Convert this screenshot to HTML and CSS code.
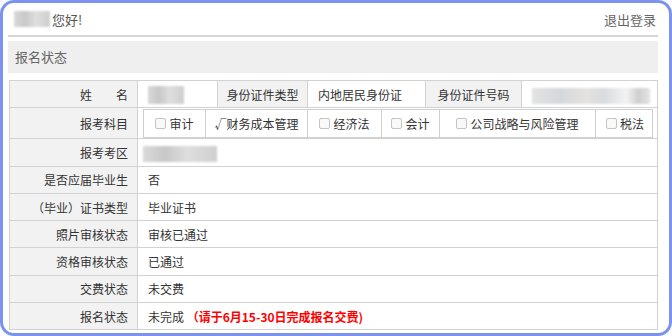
FILE: index.html
```html
<!DOCTYPE html>
<html lang="zh-CN">
<head>
    <meta charset="UTF-8">
    <meta name="viewport" content="width=device-width, initial-scale=1.0">
    <title>报名状态</title>
    <link rel="stylesheet" href="styles.css">
</head>
<body>
    <div class="frame">
        <div class="top-bar">
            <div class="greeting"><span class="blur blur-user"></span>您好!</div>
            <a class="logout" href="#">退出登录</a>
        </div>
        <div class="section-title">报名状态</div>
        <table class="status-table">
            <colgroup>
                <col class="c-label">
                <col class="c-name">
                <col class="c-idtype-label">
                <col class="c-idtype">
                <col class="c-idno-label">
                <col class="c-idno">
            </colgroup>
            <tr>
                <td class="label">姓&emsp;&emsp;名</td>
                <td><span class="blur blur-name"></span></td>
                <td class="label center">身份证件类型</td>
                <td>内地居民身份证</td>
                <td class="label center">身份证件号码</td>
                <td><span class="blur blur-id"></span></td>
            </tr>
            <tr class="subject-row">
                <td class="label">报考科目</td>
                <td colspan="5" class="subject-cell">
                    <div class="subjects">
                        <div class="subject"><span class="check"></span>审计</div>
                        <div class="subject">√财务成本管理</div>
                        <div class="subject"><span class="check"></span>经济法</div>
                        <div class="subject"><span class="check"></span>会计</div>
                        <div class="subject"><span class="check"></span>公司战略与风险管理</div>
                        <div class="subject"><span class="check"></span>税法</div>
                    </div>
                </td>
            </tr>
            <tr>
                <td class="label">报考考区</td>
                <td colspan="5" class="tight"><span class="blur blur-area"></span></td>
            </tr>
            <tr>
                <td class="label">是否应届毕业生</td>
                <td colspan="5">否</td>
            </tr>
            <tr>
                <td class="label">（毕业）证书类型</td>
                <td colspan="5">毕业证书</td>
            </tr>
            <tr>
                <td class="label">照片审核状态</td>
                <td colspan="5">审核已通过</td>
            </tr>
            <tr>
                <td class="label">资格审核状态</td>
                <td colspan="5">已通过</td>
            </tr>
            <tr>
                <td class="label">交费状态</td>
                <td colspan="5">未交费</td>
            </tr>
            <tr>
                <td class="label">报名状态</td>
                <td colspan="5">未完成 <span class="warn">（请于6月15-30日完成报名交费)</span></td>
            </tr>
        </table>
    </div>
</body>
</html>
```

FILE: styles.css
```css
body {
    margin: 0;
    background-color: #fff;
    font-family: "Noto Sans CJK SC", "Microsoft YaHei", sans-serif;
    font-size: 12px;
    color: #333;
}
.frame {
    box-sizing: border-box;
    width: 672px;
    height: 336px;
    border: 3px solid #7b93ee;
    border-radius: 14px;
    padding: 0 11px 0 5px;
    overflow: hidden;
}
.top-bar {
    display: flex;
    justify-content: space-between;
    align-items: center;
    height: 32px;
    border-bottom: 2px solid #d6d6d6;
    padding: 0 2px 0 6px;
}
.greeting {
    display: flex;
    align-items: center;
    font-size: 13px;
    color: #555;
}
.logout {
    font-size: 13px;
    color: #666;
    text-decoration: none;
}
.blur {
    display: inline-block;
    vertical-align: middle;
    background: linear-gradient(90deg, #d9d9d9, #c8c8c8 30%, #dedede 60%, #cfcfcf);
    filter: blur(1px);
}
.blur-user {
    width: 36px;
    height: 16px;
    margin-right: 2px;
}
.blur-name {
    width: 36px;
    height: 18px;
}
.blur-id {
    width: 118px;
    height: 16px;
    background: linear-gradient(90deg, #e2e2e2, #d4d8dc 25%, #e6e2de 45%, #d8dbe0 60%, #f2f2f2 80%, #cfcfcf 90%, #e4e4e4);
}
.blur-area {
    width: 74px;
    height: 16px;
}
.section-title {
    margin-top: 4px;
    height: 32px;
    line-height: 32px;
    padding-left: 7px;
    background-color: #efefef;
    font-size: 13px;
    color: #666;
}
.status-table {
    margin: 7px 0 0 1px;
    width: 648px;
    border-collapse: collapse;
    table-layout: fixed;
}
.c-label { width: 128px; }
.c-name { width: 80px; }
.c-idtype-label { width: 90px; }
.c-idtype { width: 118px; }
.c-idno-label { width: 96px; }
.c-idno { width: 136px; }
.status-table td {
    border: 1px solid #d2d2d2;
    height: 26.3px;
    padding: 0 10px;
    white-space: nowrap;
}
.status-table td.tight {
    padding-left: 5px;
}
.status-table td.label {
    background-color: #f2f2f2;
    text-align: right;
    padding-right: 9px;
}
.status-table td.center {
    text-align: center;
    padding: 0;
}
.subject-row td {
    height: 29px;
}
.status-table td.subject-cell {
    padding: 1px 4px 0 5px;
}
.subjects {
    display: grid;
    grid-template-columns: 61px 102px 74px 58px 156px 59px;
    border: 1px solid #cfcfcf;
    height: 27px;
}
.subject {
    display: flex;
    align-items: center;
    justify-content: center;
    border-left: 1px solid #cfcfcf;
}
.subject:first-child {
    border-left: none;
}
.check {
    box-sizing: border-box;
    width: 11px;
    height: 11px;
    border: 1px solid #c4c4c4;
    border-radius: 2px;
    background-color: #f9f9f9;
    margin-right: 3px;
}
.warn {
    color: #f00;
    font-weight: bold;
}
```
